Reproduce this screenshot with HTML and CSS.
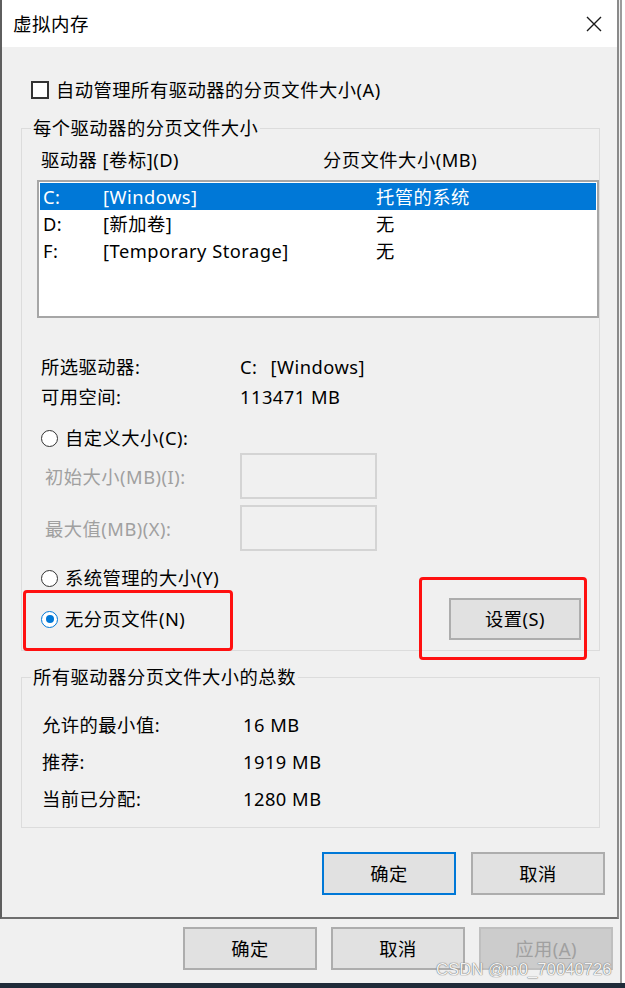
FILE: index.html
```html
<!DOCTYPE html>
<html lang="zh-CN">
<head>
<meta charset="utf-8">
<title>虚拟内存</title>
<link rel="stylesheet" href="styles.css">
</head>
<body>
<div class="screen">
  <div class="window">
    <div class="dialog">
      <div class="titlebar">
        <span class="title">虚拟内存</span>
        <svg class="close" width="16" height="16" viewBox="0 0 16 16" aria-hidden="true">
          <path d="M1 1 L15 15 M15 1 L1 15" stroke="#1a1a1a" stroke-width="1.4" fill="none"/>
        </svg>
      </div>
      <div class="body">
        <div class="check-row"><span class="checkbox"></span><span>自动管理所有驱动器的分页文件大小(A)</span></div>

        <fieldset class="group group-drives">
          <legend>每个驱动器的分页文件大小</legend>
          <div class="list-head"><span>驱动器 [卷标](D)</span><span>分页文件大小(MB)</span></div>
          <div class="listbox">
            <div class="lrow selected"><span>C:</span><span>[Windows]</span><span>托管的系统</span></div>
            <div class="lrow"><span>D:</span><span>[新加卷]</span><span>无</span></div>
            <div class="lrow"><span>F:</span><span>[Temporary Storage]</span><span>无</span></div>
          </div>
          <div class="info-row first"><span>所选驱动器:</span><span><span class="drive">C:</span>[Windows]</span></div>
          <div class="info-row"><span>可用空间:</span><span>113471 MB</span></div>
          <div class="radio-row custom"><span class="radio"></span><span>自定义大小(C):</span></div>
          <div class="field-row"><span class="field-label">初始大小(MB)(I):</span><span class="field-input"></span></div>
          <div class="field-row second"><span class="field-label">最大值(MB)(X):</span><span class="field-input"></span></div>
          <div class="radio-row system"><span class="radio"></span><span>系统管理的大小(Y)</span></div>
          <div class="set-row">
            <div class="radio-row"><span class="radio checked"></span><span>无分页文件(N)</span></div>
            <button class="btn btn-set">设置(S)</button>
          </div>
        </fieldset>

        <fieldset class="group group-total">
          <legend>所有驱动器分页文件大小的总数</legend>
          <div class="total-row first"><span>允许的最小值:</span><span>16 MB</span></div>
          <div class="total-row"><span>推荐:</span><span>1919 MB</span></div>
          <div class="total-row"><span>当前已分配:</span><span>1280 MB</span></div>
        </fieldset>

        <div class="dialog-buttons">
          <button class="btn btn-default">确定</button>
          <button class="btn">取消</button>
        </div>
      </div>
    </div>
    <div class="footer">
      <button class="btn">确定</button>
      <button class="btn">取消</button>
      <button class="btn btn-disabled">应用(<u>A</u>)</button>
    </div>
  </div>
  <div class="taskbar"></div>

  <div class="mark mark-radio"></div>
  <div class="mark mark-set"></div>
  <div class="watermark">CSDN @m0_70040726</div>
</div>
</body>
</html>
```
FILE: styles.css
```css
* { box-sizing: border-box; }

html, body {
  margin: 0;
  padding: 0;
  background: #ffffff;
}

body {
  font-family: "Noto Sans", "Noto Sans CJK SC", sans-serif;
  font-size: 18.3px;
  letter-spacing: 0.5px;
  color: #000;
}

.screen {
  position: relative;
  width: 625px;
  height: 988px;
  overflow: hidden;
  background: #ffffff;
}

.window {
  width: 622px;
  height: 983px;
  background: #f0f0f0;
  border-right: 2px solid #9c9c9c;
  display: flex;
  flex-direction: column;
}

.dialog {
  width: 619px;
  height: 919px;
  flex: none;
  background: #f0f0f0;
  border-left: 2px solid #5e5e5e;
  border-right: 2px solid #8a8a8a;
  border-bottom: 2px solid #6e6e6e;
  display: flex;
  flex-direction: column;
}

.titlebar {
  height: 47px;
  flex: none;
  background: #ffffff;
  display: flex;
  align-items: center;
  justify-content: space-between;
  padding: 0 15px 0 11px;
}

.title {
  font-size: 18.5px;
  line-height: 24px;
  margin-top: 1px;
}

.close { display: block; }

.body {
  padding-top: 31px;
  display: flex;
  flex-direction: column;
}

.check-row {
  height: 24px;
  display: flex;
  align-items: center;
  gap: 7px;
  padding-left: 29px;
  line-height: 24px;
}

.checkbox {
  width: 18px;
  height: 18px;
  border: 2px solid #333;
  background: #fff;
  flex: none;
}

.group {
  margin: 14px 0 0 19px;
  width: 579px;
  padding: 0 0 10px 0;
  border: 1px solid #dcdcdc;
  min-inline-size: 0;
}

.group legend {
  margin-left: 9px;
  padding: 0 2px;
  line-height: 24px;
}

.list-head {
  margin-top: 8px;
  height: 24px;
  line-height: 24px;
  padding-left: 19px;
  display: grid;
  grid-template-columns: 282px 1fr;
}

.listbox {
  margin: 8px 0 0 15px;
  width: 562px;
  height: 138px;
  border: 2px solid #a6a6a6;
  background: #fff;
  padding: 1px;
}

.lrow {
  height: 27px;
  line-height: 27px;
  display: grid;
  grid-template-columns: 60px 273px 1fr;
  padding-left: 3px;
}

.lrow.selected {
  background: #0078d7;
  color: #fff;
}

.info-row {
  height: 30px;
  line-height: 30px;
  padding-left: 19px;
  display: grid;
  grid-template-columns: 199px 1fr;
}

.info-row.first { margin-top: 34px; }

.drive { margin-right: 13px; }

.radio-row {
  height: 30px;
  display: flex;
  align-items: center;
  gap: 7px;
  padding-left: 19px;
  line-height: 30px;
}

.radio-row.custom { margin-top: 11px; }
.radio-row.system { margin-top: 12px; }

.radio {
  width: 17px;
  height: 17px;
  border-radius: 50%;
  border: 1.6px solid #333;
  background: #fff;
  flex: none;
  display: flex;
  align-items: center;
  justify-content: center;
}

.radio.checked {
  border-color: #0078d7;
}

.radio.checked::after {
  content: "";
  width: 8px;
  height: 8px;
  border-radius: 50%;
  background: #0078d7;
}

.field-row {
  height: 46px;
  display: flex;
  align-items: center;
  padding-left: 23px;
  color: #a0a0a0;
}

.field-row.second { margin-top: 6px; }

.field-label { width: 195px; flex: none; }

.field-input {
  width: 137px;
  height: 46px;
  border: 2px solid #d4d4d4;
  background: #f0f0f0;
}

.set-row {
  margin-top: 5px;
  height: 42px;
  display: flex;
  align-items: center;
  justify-content: space-between;
  padding-right: 18px;
}

.set-row .radio-row { padding-left: 19px; }

.btn {
  font: inherit;
  letter-spacing: inherit;
  color: #000;
  width: 134px;
  height: 43px;
  background: #e1e1e1;
  border: 2px solid #adadad;
  padding: 0;
  margin: 0;
  line-height: 24px;
  display: inline-flex;
  align-items: center;
  justify-content: center;
}

.btn-set {
  width: 132px;
  height: 42px;
}

.btn-default {
  border-color: #0078d7;
}

.btn-disabled {
  background: #cccccc;
  border-color: #bfbfbf;
  color: #a0a0a0;
}

.btn-disabled u { text-underline-offset: 2px; }

.group-total { margin-top: 14px; }

.total-row {
  height: 37px;
  line-height: 37px;
  padding-left: 20px;
  display: grid;
  grid-template-columns: 201px 1fr;
}

.total-row.first { margin-top: 17px; }

.dialog-buttons {
  margin-top: 24px;
  display: flex;
  justify-content: flex-end;
  gap: 15px;
  padding-right: 12px;
}

.footer {
  flex: 1;
  padding: 8px 7px 0 0;
  display: flex;
  justify-content: flex-end;
  align-items: flex-start;
  gap: 14px;
}

.taskbar {
  height: 5px;
  background: #1f2b39;
}

.mark {
  position: absolute;
  border: 3px solid #ff1010;
  border-radius: 4px;
}

.mark-radio {
  left: 23px;
  top: 590px;
  width: 210px;
  height: 61px;
}

.mark-set {
  left: 419px;
  top: 577px;
  width: 168px;
  height: 83px;
}

.watermark {
  position: absolute;
  left: 436px;
  top: 962px;
  font-family: "Liberation Sans", Arial, sans-serif;
  font-size: 16.7px;
  letter-spacing: 0;
  line-height: 16px;
  color: #f2f2f2;
  text-shadow: 0 0 1px #666, 0 0 1px #777;
}
```
